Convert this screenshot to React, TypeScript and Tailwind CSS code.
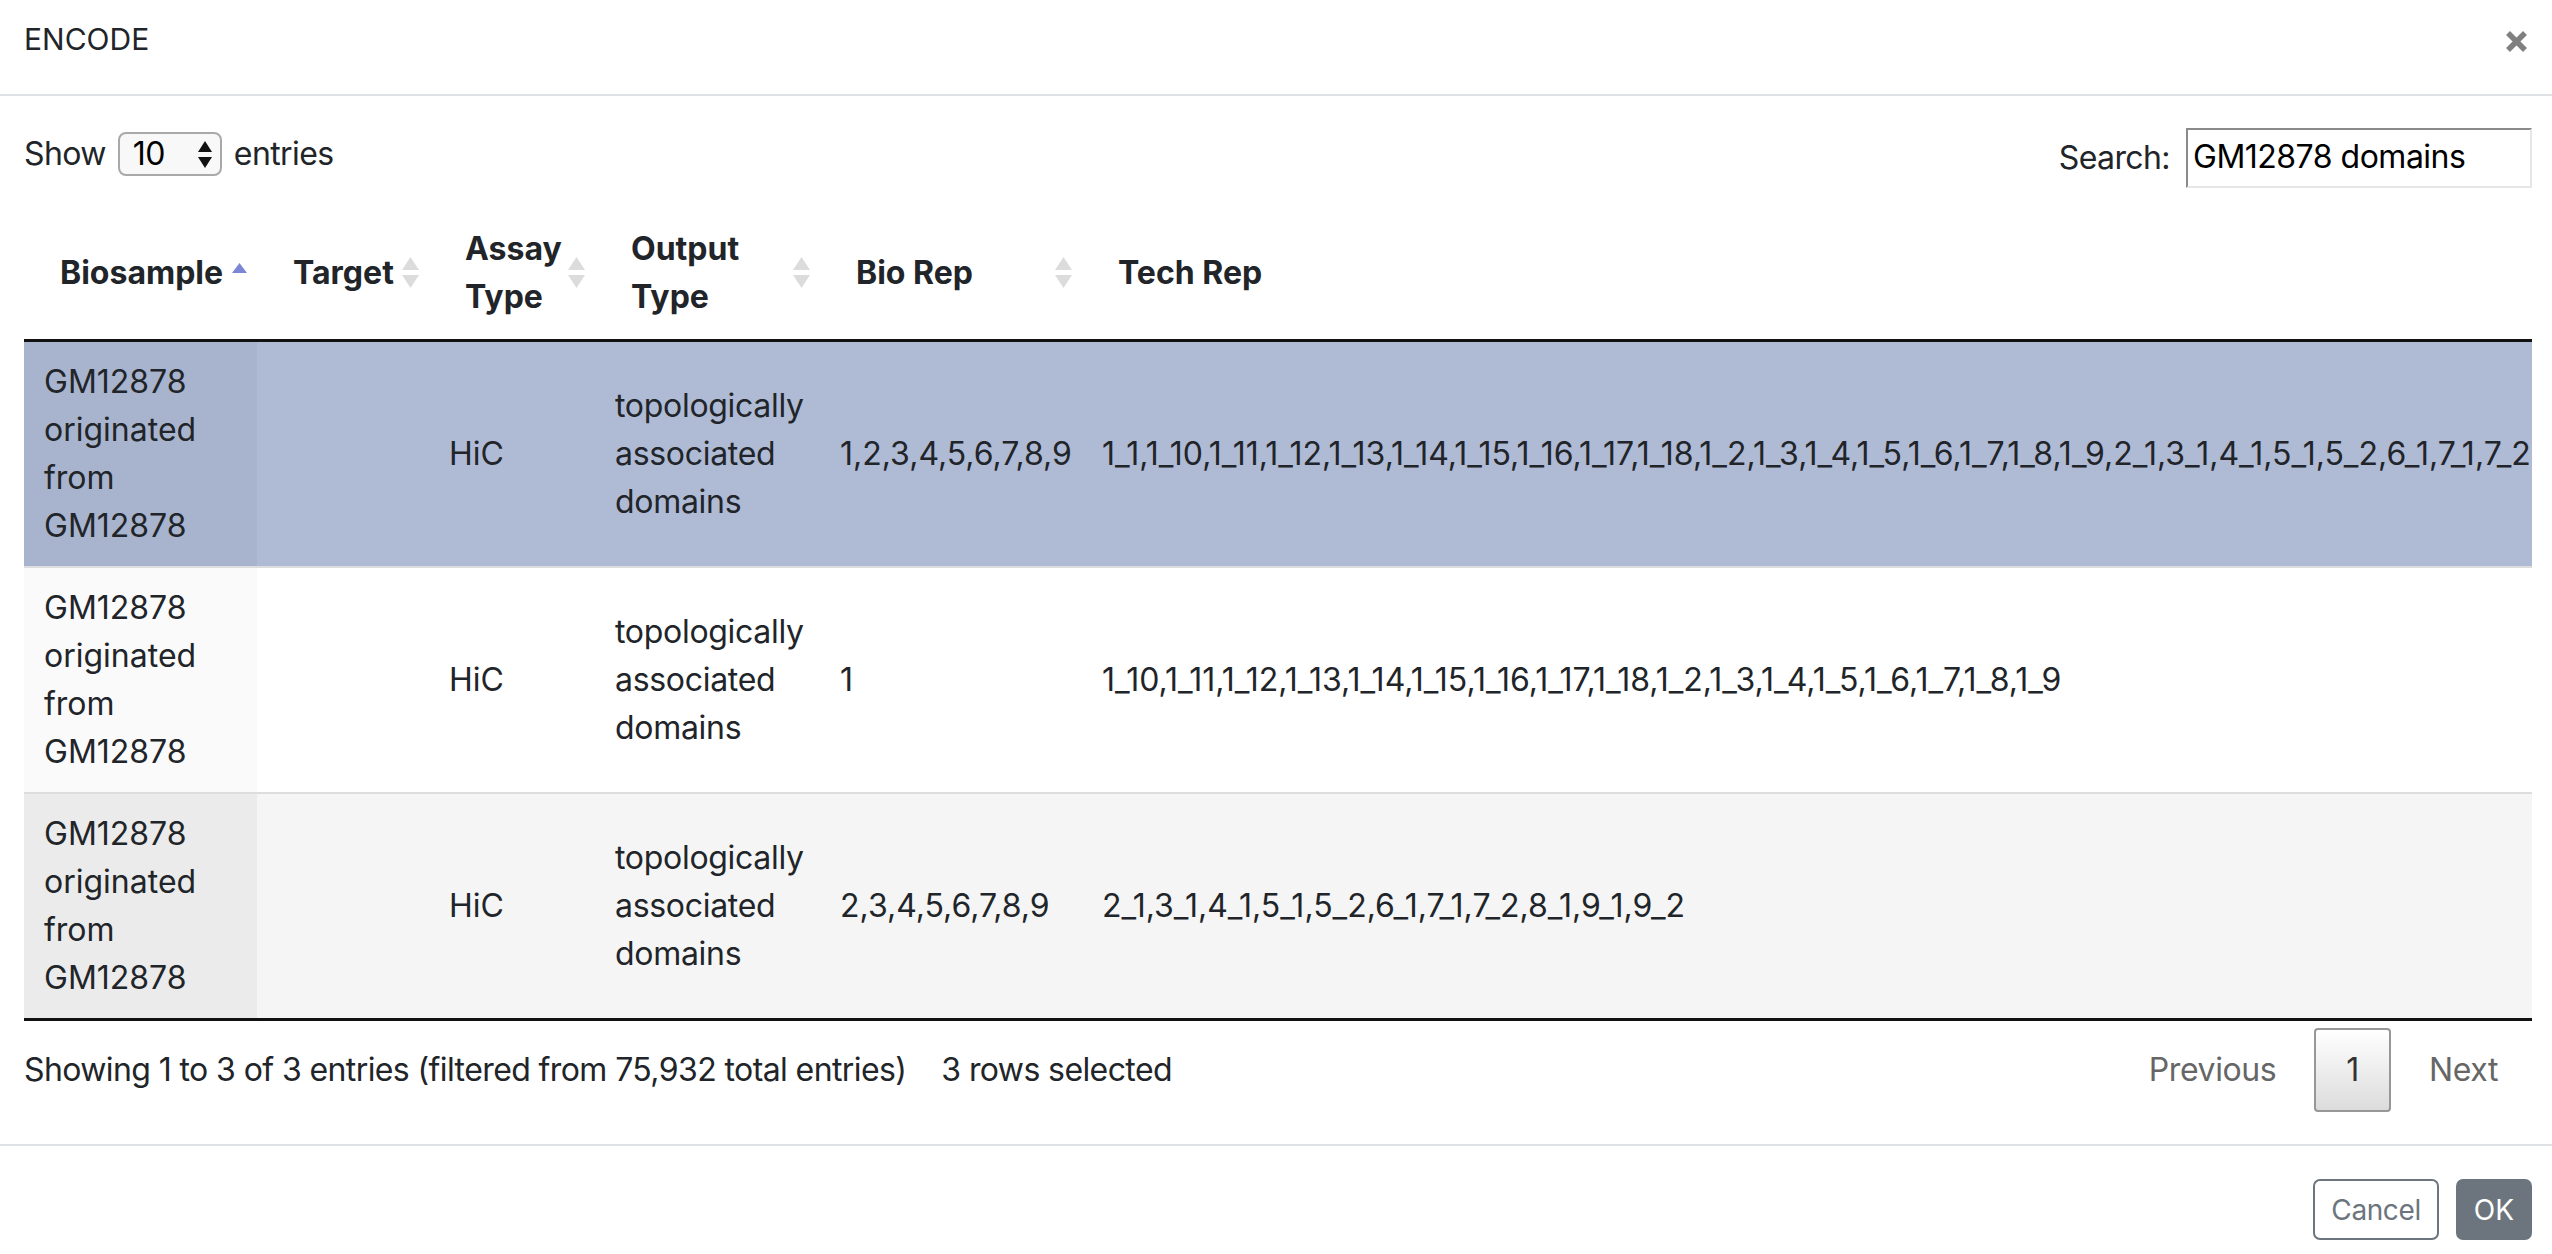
const rowTech1 =
  '1_1,1_10,1_11,1_12,1_13,1_14,1_15,1_16,1_17,1_18,1_2,1_3,1_4,1_5,1_6,1_7,1_8,1_9,2_1,3_1,4_1,5_1,5_2,6_1,7_1,7_2,8_1,9_1,9_2';

const rows = [
  {
    bio: '1,2,3,4,5,6,7,8,9',
    tech: rowTech1,
    rowBg: 'bg-[#afbad5]',
    sortBg: 'bg-[#a8b4cd]',
  },
  {
    bio: '1',
    tech: '1_10,1_11,1_12,1_13,1_14,1_15,1_16,1_17,1_18,1_2,1_3,1_4,1_5,1_6,1_7,1_8,1_9',
    rowBg: 'bg-white',
    sortBg: 'bg-[#fafafa]',
  },
  {
    bio: '2,3,4,5,6,7,8,9',
    tech: '2_1,3_1,4_1,5_1,5_2,6_1,7_1,7_2,8_1,9_1,9_2',
    rowBg: 'bg-[#f5f5f5]',
    sortBg: 'bg-[#ebebeb]',
  },
];

const SortBoth = () => (
  <svg width="17" height="31" viewBox="0 0 17 31" className="absolute right-[10px] top-[52px]">
    <path d="M0 13 L8.5 0 L17 13 Z" fill="#dcdcdc" />
    <path d="M0 18 L8.5 31 L17 18 Z" fill="#dcdcdc" />
  </svg>
);

const SortAsc = () => (
  <svg width="15" height="10" viewBox="0 0 15 10" className="absolute right-[10px] top-[58px]">
    <path d="M0 10 L7.5 0 L15 10 Z" fill="#7d86d6" />
  </svg>
);

const headers = [
  { label: 'Biosample', w: 'w-[233px]', icon: 'asc' },
  { label: 'Target', w: 'w-[172px]', icon: 'both' },
  { label: 'Assay Type', w: 'w-[166px]', icon: 'both' },
  { label: 'Output Type', w: 'w-[225px]', icon: 'both' },
  { label: 'Bio Rep', w: 'w-[262px]', icon: 'both' },
  { label: 'Tech Rep', w: '', icon: 'none' },
];

const App = () => {
  return (
    <div className="w-[2552px] h-[1254px] overflow-hidden bg-white text-[#212529] text-[32px] leading-[48px] font-['Inter','Liberation_Sans',sans-serif]">
      {/* modal header */}
      <div className="flex justify-between items-start h-[96px] border-b-2 border-[#dee2e6] pl-[24px] pr-[24px] pt-[17px]">
        <h5 className="text-[30px] leading-[45px]">ENCODE</h5>
        <svg width="23" height="23" viewBox="0 0 23 23" className="mt-[13px]">
          <path d="M3 3 L20 20 M20 3 L3 20" stroke="#808080" strokeWidth="5.5" />
        </svg>
      </div>

      {/* modal body */}
      <div className="pl-[24px] pr-[20px] pt-[32px]">
        <div className="flex justify-between items-start h-[60px]">
          <div className="flex items-center h-[52px] tracking-[-0.6px]">
            <span>Show</span>
            <div className="mx-[12px] w-[104px] h-[44px] rounded-[8px] border-2 border-[#a9a9a9] bg-[#f8f8f8] flex items-center justify-between pl-[13px] pr-[7px] text-black">
              <span>10</span>
              <svg width="16" height="29" viewBox="0 0 16 29">
                <path d="M1 12 L8 1 L15 12 Z" fill="#111" />
                <path d="M1 17 L8 28 L15 17 Z" fill="#111" />
              </svg>
            </div>
            <span>entries</span>
          </div>
          <div className="flex items-center h-[60px]">
            <span className="mr-[16px] tracking-[-0.6px]">Search:</span>
            <div className="w-[346px] h-[60px] border-2 border-t-[#8a8a8a] border-l-[#8a8a8a] border-r-[#e6e6e6] border-b-[#e6e6e6] pl-[5px] leading-[54px] text-black tracking-[-0.5px]">
              GM12878 domains
            </div>
          </div>
        </div>

        <div className="mt-[17px] overflow-hidden">
          <table className="table-fixed w-[3400px] border-separate border-spacing-0">
            <thead>
              <tr>
                {headers.map((h) => (
                  <th
                    key={h.label}
                    className={`${h.w} relative text-left align-middle font-bold pl-[36px] pr-[36px] pt-[20px] pb-[18px] border-b-[3px] border-[#111]`}
                  >
                    {h.label}
                    {h.icon === 'asc' && <SortAsc />}
                    {h.icon === 'both' && <SortBoth />}
                  </th>
                ))}
              </tr>
            </thead>
            <tbody>
              {rows.map((r, i) => {
                const border = i === 0 ? '' : 'border-t-2 border-[#dddddd]';
                return (
                  <tr key={i} className={r.rowBg}>
                    <td className={`${border} ${r.sortBg} px-[20px] py-[16px] align-middle`}>
                      GM12878 originated from GM12878
                    </td>
                    <td className={`${border} px-[20px] py-[16px] align-middle`}></td>
                    <td className={`${border} px-[20px] py-[16px] align-middle`}>HiC</td>
                    <td className={`${border} px-[20px] py-[16px] align-middle tracking-[-0.3px]`}>
                      topologically associated domains
                    </td>
                    <td className={`${border} px-[20px] py-[16px] align-middle`}>{r.bio}</td>
                    <td className={`${border} px-[20px] py-[16px] align-middle whitespace-nowrap`}>{r.tech}</td>
                  </tr>
                );
              })}
            </tbody>
          </table>
        </div>
        <div className="border-t-[3px] border-[#111]" />

        <div className="flex justify-between items-center pt-[7px] pb-[32px]">
          <div className="tracking-[-0.6px]">
            Showing 1 to 3 of 3 entries (filtered from 75,932 total entries)
            <span className="ml-[35px]">3 rows selected</span>
          </div>
          <div className="flex items-center tracking-[-0.4px]">
            <span className="px-[32px] py-[16px] border-2 border-transparent text-[#666]">Previous</span>
            <span className="ml-[4px] px-[30px] h-[84px] flex items-center border-2 border-[#979797] rounded-[4px] bg-linear-to-b from-white to-[#dcdcdc] text-[#333]">
              1
            </span>
            <span className="ml-[4px] px-[32px] py-[16px] border-2 border-transparent text-[#666]">Next</span>
          </div>
        </div>
      </div>

      {/* modal footer */}
      <div className="border-t-2 border-[#dee2e6] flex justify-end gap-[17px] pt-[33px] pr-[20px]">
        <button className="h-[61px] px-[16px] border-2 border-[#6c757d] rounded-[7px] text-[#6c757d] text-[28px] leading-[42px] tracking-[-0.4px]">
          Cancel
        </button>
        <button className="h-[61px] px-[16px] border-2 border-[#6c757d] bg-[#6c757d] rounded-[7px] text-white text-[28px] leading-[42px]">
          OK
        </button>
      </div>
    </div>
  );
};

export default App;
